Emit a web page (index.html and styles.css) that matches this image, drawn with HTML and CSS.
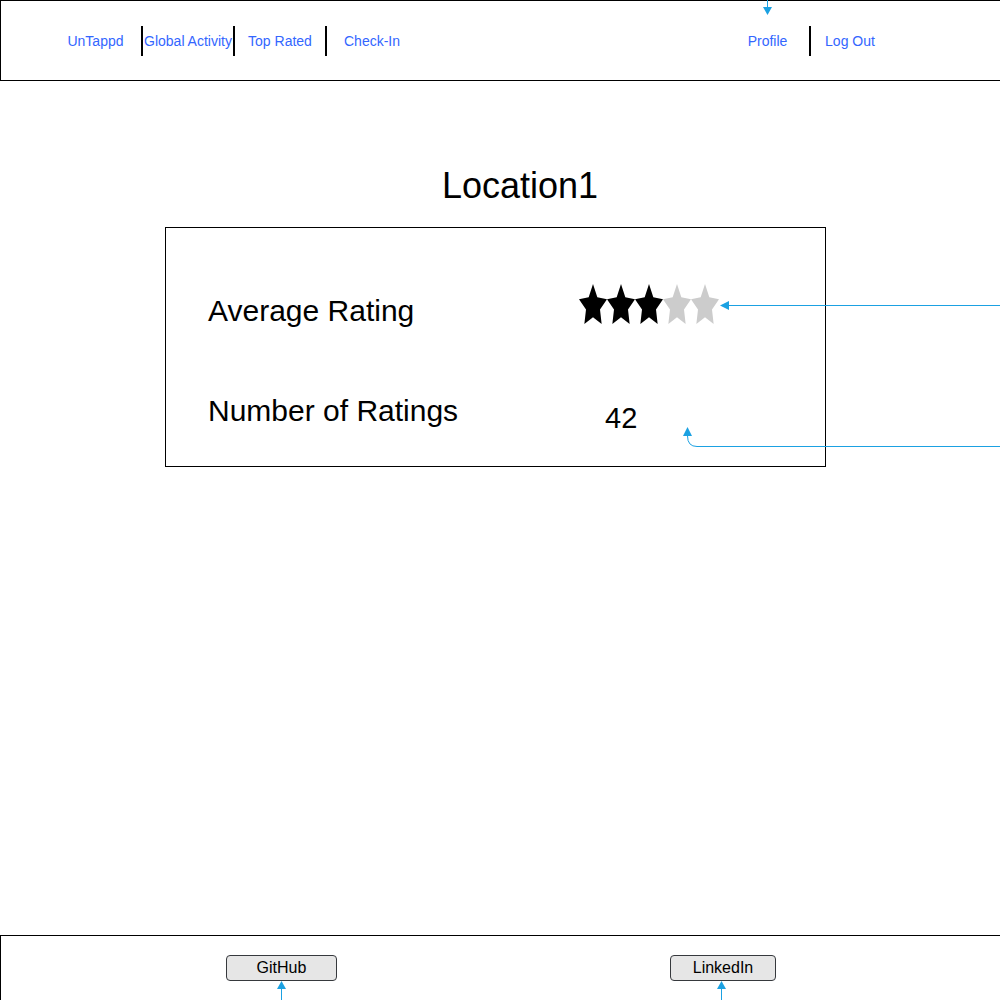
FILE: index.html
```html
<!DOCTYPE html>
<html lang="en">
<head>
  <meta charset="UTF-8" />
  <meta name="viewport" content="width=device-width, initial-scale=1.0"/>
  <title>Location1 - UnTappd</title>
  <link rel="stylesheet" href="styles.css">
</head>
<body>

<div class="page">
  <header class="topbar">
    <nav class="nav-left">
      <a class="nav-item" href="#">UnTappd</a>
      <a class="nav-item" href="#">Global Activity</a>
      <a class="nav-item" href="#">Top Rated</a>
      <a class="nav-item" href="#">Check-In</a>
    </nav>
    <nav class="nav-right">
      <a class="nav-item profile" href="#">Profile</a>
      <a class="nav-item logout" href="#">Log Out</a>
    </nav>
  </header>

  <main class="content">
    <h1 class="location-title">Location1</h1>

    <section class="stats-card">
      <div class="stat-row">
        <span class="stat-label">Average Rating</span>
        <div class="stars">
          <svg class="star" viewBox="2 2 20 19.5" preserveAspectRatio="none"><polygon class="on" points="12,2 15.09,8.26 22,9.27 17,14.14 18.18,21.02 12,17.77 5.82,21.02 7,14.14 2,9.27 8.91,8.26"/></svg>
          <svg class="star" viewBox="2 2 20 19.5" preserveAspectRatio="none"><polygon class="on" points="12,2 15.09,8.26 22,9.27 17,14.14 18.18,21.02 12,17.77 5.82,21.02 7,14.14 2,9.27 8.91,8.26"/></svg>
          <svg class="star" viewBox="2 2 20 19.5" preserveAspectRatio="none"><polygon class="on" points="12,2 15.09,8.26 22,9.27 17,14.14 18.18,21.02 12,17.77 5.82,21.02 7,14.14 2,9.27 8.91,8.26"/></svg>
          <svg class="star" viewBox="2 2 20 19.5" preserveAspectRatio="none"><polygon class="off" points="12,2 15.09,8.26 22,9.27 17,14.14 18.18,21.02 12,17.77 5.82,21.02 7,14.14 2,9.27 8.91,8.26"/></svg>
          <svg class="star" viewBox="2 2 20 19.5" preserveAspectRatio="none"><polygon class="off" points="12,2 15.09,8.26 22,9.27 17,14.14 18.18,21.02 12,17.77 5.82,21.02 7,14.14 2,9.27 8.91,8.26"/></svg>
        </div>
      </div>
      <div class="stat-row">
        <span class="stat-label">Number of Ratings</span>
        <span class="rating-count">42</span>
      </div>
    </section>
  </main>

  <footer class="footer">
    <button class="footer-btn github">GitHub</button>
    <button class="footer-btn linkedin">LinkedIn</button>
  </footer>

  <!-- annotation connectors from the wireframe -->
  <svg class="connectors" width="1000" height="1000" viewBox="0 0 1000 1000">
    <g fill="none" stroke="#1ba1e2" stroke-width="1">
      <path d="M767.5 0 V8"/>
      <path d="M1000 305.5 H728"/>
      <path d="M1000 446.5 H697 Q687.5 446.5 687.5 436"/>
      <path d="M281.5 1000 V989"/>
      <path d="M721.5 1000 V989"/>
    </g>
    <g fill="#1ba1e2">
      <polygon points="763,7 772,7 767.5,15"/>
      <polygon points="720,305.5 729,301 729,310"/>
      <polygon points="683,436 692,436 687.5,427"/>
      <polygon points="277,989 286,989 281.5,981"/>
      <polygon points="717,989 726,989 721.5,981"/>
    </g>
  </svg>
</div>

</body>
</html>
```

FILE: styles.css
```css
html, body {
  margin: 0;
  padding: 0;
}
body {
  font-family: "Liberation Sans", Arial, sans-serif;
  background: #fff;
  color: #000;
  overflow: hidden;
}
.page {
  position: relative;
  width: 1000px;
  height: 1000px;
  display: flex;
  flex-direction: column;
  overflow: hidden;
}

/* top navigation */
.topbar {
  width: 1010px;
  height: 79px;
  border: 1px solid #000;
  display: flex;
  align-items: center;
  flex-shrink: 0;
}
.nav-left, .nav-right {
  display: flex;
  align-items: center;
}
.nav-left {
  margin-left: 50px;
}
.nav-right {
  margin-left: 309px;
}
.nav-item {
  display: block;
  width: 90px;
  height: 30px;
  line-height: 30px;
  text-align: center;
  font-size: 14px;
  color: #3366ff;
  text-decoration: none;
  white-space: nowrap;
}
.nav-item + .nav-item {
  border-left: 2px solid #000;
}
.nav-left .nav-item:first-child {
  width: 89px;
  padding-right: 1px;
}
.nav-right .profile {
  width: 83px;
}
.nav-right .logout {
  width: 78px;
}

/* main */
.content {
  flex: 1;
}
.location-title {
  margin: 84px 0 20px;
  padding-left: 40px;
  text-align: center;
  font-size: 36px;
  line-height: 42px;
  font-weight: normal;
}
.stats-card {
  margin-left: 165px;
  width: 659px;
  height: 205px;
  border: 1px solid #000;
  padding-top: 33px;
}
.stat-row {
  display: flex;
  align-items: center;
  height: 100px;
  padding-left: 42px;
}
.stat-label {
  width: 371px;
  font-size: 30px;
  line-height: 36px;
}
.stars {
  display: flex;
  align-self: flex-start;
  margin-top: 23px;
}
.star {
  width: 28px;
  height: 41px;
  display: block;
}
.star .on {
  fill: #000;
}
.star .off {
  fill: #cccccc;
}
.rating-count {
  margin-left: 26px;
  margin-top: 14px;
  font-size: 29px;
  line-height: 34px;
}

/* footer */
.footer {
  height: 70px;
  border-top: 1px solid #000;
  border-left: 1px solid #000;
  display: flex;
  align-items: flex-start;
  flex-shrink: 0;
  margin-bottom: -6px;
}
.footer-btn {
  margin-top: 19px;
  height: 26px;
  padding: 0;
  background: #e6e6e6;
  border: 1px solid #36393d;
  border-radius: 4px;
  font-family: "Liberation Sans", Arial, sans-serif;
  font-size: 16px;
  line-height: 24px;
  color: #000;
}
.footer-btn.github {
  margin-left: 225px;
  width: 111px;
}
.footer-btn.linkedin {
  margin-left: 333px;
  width: 106px;
}

.connectors {
  position: absolute;
  left: 0;
  top: 0;
  pointer-events: none;
}
```
